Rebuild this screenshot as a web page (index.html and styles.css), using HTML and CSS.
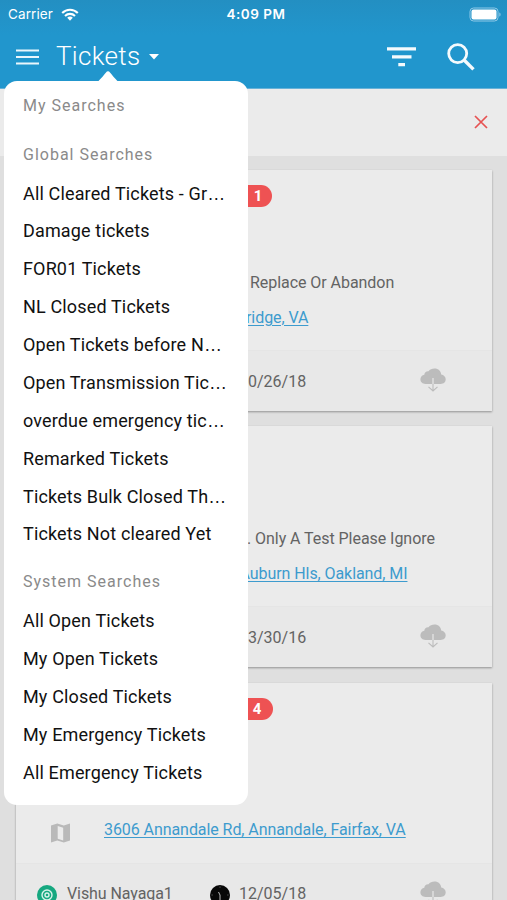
FILE: index.html
```html
<!DOCTYPE html>
<html lang="en">
<head>
<meta charset="utf-8">
<title>Tickets</title>
<link rel="stylesheet" href="styles.css">
</head>
<body>
<svg class="defs" width="0" height="0">
  <symbol id="cloud" viewBox="0 0 26 24">
    <path fill="#bcbcbc" d="M5.500 16C2.500 16 .4 14 .4 11.300 .4 9 2 7.200 4.300 6.800 4.500 4.300 6.200 3 8.500 3.200 9.800 1.400 12 .4 14.500.4c4 0 6.500 2.600 6.700 6.100 2.600.5 4.500 2.400 4.500 4.800 0 2.800-2.100 4.700-5 4.700z"/>
    <path fill="none" stroke="#e8e8e8" stroke-width="1.200" d="M13 10v6"/>
    <path fill="none" stroke="#bcbcbc" stroke-width="1.100" d="M13 16v6.800M8.500 18.800 13 23l4.500-4.200"/>
  </symbol>
</svg>
<div class="screen">
  <header class="header">
    <div class="status">
      <div class="carrier">Carrier
        <svg width="18" height="13" viewBox="0 0 18 13" fill="none" stroke="#fff" stroke-width="2.100"><path d="M1.200 5C5.600.6 12.400.6 16.800 5"/><path d="M4 8c2.900-2.800 7.100-2.800 10 0"/><path fill="#fff" stroke="none" d="M6.200 9.700c1.600-1.500 4-1.500 5.600 0L9 12.700z"/></svg>
      </div>
      <div class="time">4:09 PM</div>
      <svg class="battery" width="33" height="15" viewBox="0 0 33 15"><rect x="1" y="1" width="28" height="13" rx="3.500" fill="none" stroke="#8fc9e8"/><rect x="2.500" y="2.500" width="25" height="10" rx="2" fill="#fff"/><path d="M30.300 5.500v4c1.700-.5 1.700-3.500 0-4z" fill="#8fc9e8"/></svg>
    </div>
    <nav class="toolbar">
      <svg class="burger" width="23" height="16" viewBox="0 0 23 16" stroke="#eaf6fc" stroke-width="2.200"><path d="M0 1.500h23M0 8h23M0 14.500h23"/></svg>
      <h1 class="title">Tickets</h1>
      <svg class="caret" width="10" height="6" viewBox="0 0 10 6"><path fill="#fff" d="M0 0h10L5 5.500z"/></svg>
      <svg class="filter" width="29" height="20" viewBox="0 0 29 20" stroke="#f4fafd" stroke-width="3.200"><path d="M0 1.800h29M5 9.800h19.500M11.300 17.700h6.700"/></svg>
      <svg class="search" width="28" height="28" viewBox="0 0 28 28" fill="none" stroke="#f4fafd"><circle cx="10.700" cy="10.600" r="9" stroke-width="2.800"/><path stroke-width="3.400" d="m17.300 17.200 9.200 9.200"/></svg>
    </nav>
  </header>
  <div class="banner">
    <svg width="14" height="14" viewBox="0 0 14 14" stroke="#e65252" stroke-width="1.700"><path d="m1 1 12 12M13 1 1 13"/></svg>
  </div>
  <main class="cards">
    <article class="card">
      <div class="body">
        <div class="badge">1</div>
        <p class="desc replace">Replace Or Abandon</p>
        <a class="link bridge">ridge, VA</a>
      </div>
      <footer class="foot"><span class="date">10/26/18</span><svg class="cloud"><use href="#cloud"/></svg></footer>
    </article>
    <article class="card">
      <div class="body">
        <p class="desc test">. Only A Test Please Ignore</p>
        <a class="link auburn">Auburn Hls, Oakland, MI</a>
      </div>
      <footer class="foot"><span class="date">03/30/16</span><svg class="cloud"><use href="#cloud"/></svg></footer>
    </article>
    <article class="card">
      <div class="body">
        <div class="badge four">4</div>
        <svg class="map" width="19" height="20" viewBox="0 0 19 20"><path fill="#b9b9b9" fill-rule="evenodd" d="M0 2.500 6.300.5l6.500 2 6.200-2v17l-6.200 2-6.500-2-6.300 2zM6.700 3v12.700l5.500 1.700V4.700z"/></svg>
        <a class="link">3606 Annandale Rd, Annandale, Fairfax, VA</a>
      </div>
      <footer class="foot">
        <svg class="target" width="20" height="20" viewBox="0 0 20 20"><circle cx="10" cy="10" r="10" fill="#16a880"/><g fill="none" stroke="#d9f3ea" stroke-width="1.400"><circle cx="10" cy="10" r="5"/><circle cx="10" cy="10" r="2"/></g></svg>
        <span class="person">Vishu Nayaga1</span>
        <svg class="clock" width="20" height="20" viewBox="0 0 20 20"><circle cx="10" cy="10" r="10" fill="#080808"/><path fill="none" stroke="#bbb" d="m8.500 7 1.500 3v5"/><path stroke="#666" d="M10 1.500v1.200M1.500 10h1.200M17.300 10h1.200"/></svg>
        <span class="date">12/05/18</span><svg class="cloud"><use href="#cloud"/></svg>
      </footer>
    </article>
  </main>
  <aside class="menu">
    <svg class="pointer" width="22" height="11" viewBox="0 0 22 11"><path fill="#fff" d="M0 11C2 10 6 5 8.800 1.700c1.500-1.800 2.900-1.800 4.400 0C16 5 20 10 22 11z"/></svg>
    <h2 class="group">My Searches</h2>
    <h2 class="group global">Global Searches</h2>
    <ul class="list">
      <li>All Cleared Tickets - Gr<span class="more">…</span></li>
      <li>Damage tickets</li>
      <li>FOR01 Tickets</li>
      <li>NL Closed Tickets</li>
      <li>Open Tickets before N<span class="more">…</span></li>
      <li>Open Transmission Tic<span class="more">…</span></li>
      <li>overdue emergency tic<span class="more">…</span></li>
      <li>Remarked Tickets</li>
      <li>Tickets Bulk Closed Th<span class="more">…</span></li>
      <li>Tickets Not cleared Yet</li>
    </ul>
    <h2 class="group system">System Searches</h2>
    <ul class="list">
      <li>All Open Tickets</li>
      <li>My Open Tickets</li>
      <li>My Closed Tickets</li>
      <li>My Emergency Tickets</li>
      <li>All Emergency Tickets</li>
    </ul>
  </aside>
</div>
</body>
</html>
```
FILE: styles.css
```css
* { box-sizing: border-box; }
body, h1, h2, p, ul { margin: 0; padding: 0; font-weight: 400; }
body { font-family: Roboto, "Liberation Sans", sans-serif; background: #dfdfdf; }
svg { display: block; flex: none; }
.defs { position: absolute; }
.screen { position: relative; width: 507px; height: 900px; overflow: hidden; }
.header { height: 89px; background: linear-gradient(#238fc2, #2196cd 35px); border-bottom: 1px solid #68b2d8; color: #fff; }
.status { height: 27px; display: grid; grid-template-columns: 1fr auto 1fr; align-items: center; padding: 0 5px 0 8px; font: 13.500px/27px Inter, sans-serif; }
.carrier { display: flex; align-items: center; gap: 8px; letter-spacing: .1px; }
.time { font-weight: 600; letter-spacing: .5px; padding: 1px 0 0 2px; }
.battery { justify-self: end; }
.toolbar { height: 60px; display: flex; align-items: center; padding: 0 32px 0 16px; }
.title { font-size: 26px; line-height: 56px; padding-bottom: 2px; font-weight: 300; letter-spacing: .3px; margin-left: 17px; width: 87px; }
.caret { margin: -1px 0 0 6px; }
.filter { margin-left: auto; }
.search { margin-left: 31px; }
.banner { height: 67px; background: #ebebeb; display: flex; align-items: center; justify-content: flex-end; padding: 0 19px 1px 0; }
.cards { display: flex; flex-direction: column; gap: 15.400px; padding: 14px 15px 0 16px; }
.card { height: 241px; flex: none; background: #ebebeb; box-shadow: 0 1px 2px rgba(0,0,0,.35); font-size: 16px; line-height: 20px; color: #636363; }
.body { height: 181px; border-bottom: 1px solid #e5e5e5; display: grid; grid-template-columns: 88px 1fr; grid-template-rows: 15px 22px 66px 20px 14.500px 20px; }
.badge { grid-area: 2 / 2; margin-left: 128px; width: 40px; height: 22px; border-radius: 11px; padding-left: 12px; background: #ee5253; color: #fff; font-size: 15px; font-weight: 700; line-height: 22px; text-align: center; }
.four { width: 41px; padding-left: 9px; }
.desc { grid-area: 4 / 2; white-space: nowrap; letter-spacing: -.05px; }
.link { grid-area: 6 / 2; white-space: nowrap; letter-spacing: -.07px; color: #3d9bce; text-decoration: underline; text-underline-offset: 2px; text-decoration-thickness: 1px; }
.replace { margin-left: 146px; }
.test { margin-left: 143px; }
.bridge { margin-left: 142px; }
.auburn { margin-left: 135.500px; }
.map { grid-area: 6 / 1; margin: 2.500px 0 0 35px; }
.foot { height: 60px; display: flex; align-items: center; padding: 1px 46px 0 21px; background: #e8e8e8; }
.target { margin-top: 1px; }
.person { margin-left: 10px; width: 143px; letter-spacing: -.08px; }
.clock { margin-top: 1px; }
.date { margin-left: auto; width: 181px; }
.clock + .date { margin-left: 9px; }
.cloud { width: 26px; height: 24px; margin-top: -3px; }
.menu { position: absolute; left: 4px; top: 81px; width: 244px; height: 724px; border-radius: 13px; background: #fff; padding: 15px 0 0 19px; }
.pointer { position: absolute; left: 93px; top: -10px; }
.group { font-size: 16px; line-height: 20px; letter-spacing: 1px; color: #8a8a8a; }
.global { margin: 29px 0 9.600px; }
.system { margin: 18.900px 0 10px; }
.list { list-style: none; font-size: 18px; line-height: 37.880px; letter-spacing: .15px; color: #111; white-space: nowrap; }
.more { font-family: "Liberation Sans", sans-serif; line-height: 0; letter-spacing: 0; }
```
